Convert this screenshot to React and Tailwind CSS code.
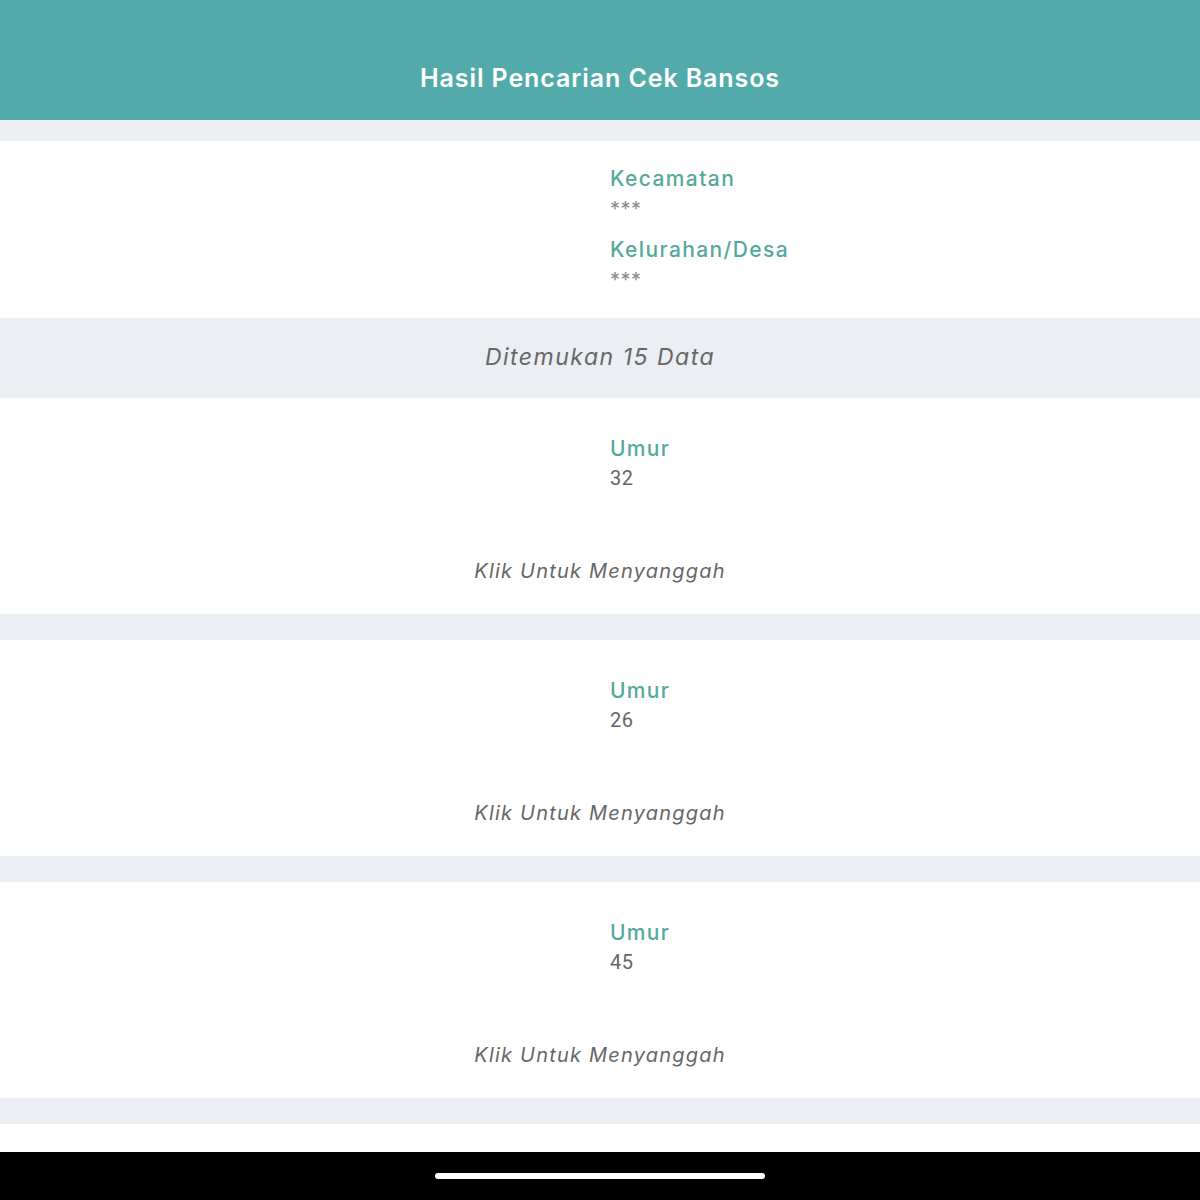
const font = { fontFamily: "Inter, 'Noto Sans', sans-serif" };

function Field({ label, value }) {
  return (
    <div className="flex flex-col">
      <span className="text-[21px] leading-[28px] font-medium text-[#55a99b] tracking-[1.4px]">{label}</span>
      <span className="text-[20px] leading-[26px] pt-[3px] text-[#8a8a8a] tracking-[0.5px]">{value}</span>
    </div>
  );
}

function Gap({ h = "h-[26px]" }) {
  return <div className={`${h} bg-[#ebeef2]`} />;
}

function ResultCard({ age }) {
  return (
    <div className="bg-white h-[216px] flex flex-col">
      <div className="grid grid-cols-2 pt-[37px]">
        <div />
        <div className="pl-[10px]">
          <span className="block text-[21px] leading-[28px] font-medium text-[#55a99b] tracking-[1.3px]">Umur</span>
          <span className="block text-[20px] leading-[30px] text-[#666] tracking-[0.5px]" style={{ fontFamily: "Roboto, sans-serif" }}>{age}</span>
        </div>
      </div>
      <div className="mt-[64px] text-center italic text-[20px] leading-[28px] text-[#666] tracking-[1.2px]">Klik Untuk Menyanggah</div>
    </div>
  );
}

export default function App() {
  return (
    <div className="w-[1200px] h-[1200px] flex flex-col bg-[#ebeef2] overflow-hidden" style={font}>
      <header className="h-[120px] bg-[#52abaa] flex items-center justify-center pt-[36px]">
        <h1 className="text-white text-[25px] font-semibold leading-[40px] tracking-[0.9px]">Hasil Pencarian Cek Bansos</h1>
      </header>
      <Gap h="h-[21px]" />
      <section className="bg-white h-[177px] grid grid-cols-2 pt-[24px]">
        <div />
        <div className="pl-[10px] flex flex-col gap-[14px]">
          <Field label="Kecamatan" value="***" />
          <Field label="Kelurahan/Desa" value="***" />
        </div>
      </section>
      <div className="h-[80px] flex items-center justify-center">
        <span className="italic text-[23px] text-[#666] tracking-[1.5px] -mt-[2px]">Ditemukan 15 Data</span>
      </div>
      <ResultCard age="32" />
      <Gap />
      <ResultCard age="26" />
      <Gap />
      <ResultCard age="45" />
      <Gap />
      <div className="h-[28px] bg-white" />
      <div className="flex-1 bg-black flex justify-center pt-[21px]">
        <div className="w-[330px] h-[6px] rounded-full bg-white" />
      </div>
    </div>
  );
}
